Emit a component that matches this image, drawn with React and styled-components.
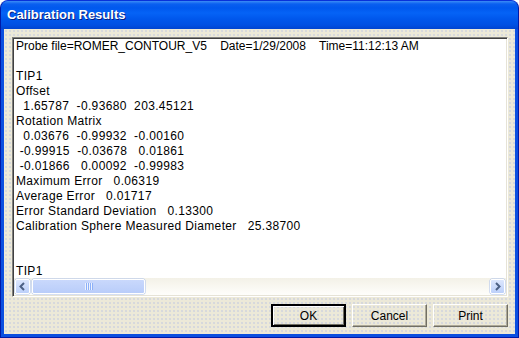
import React from "react";
import styled, { createGlobalStyle, css } from "styled-components";

const GlobalStyle = createGlobalStyle`
  html, body {
    margin: 0;
    padding: 0;
    background: #ffffff;
  }
  #root {
    width: 519px;
    height: 338px;
  }
`;

const header = "Probe file=ROMER_CONTOUR_V5    Date=1/29/2008    Time=11:12:13 AM";

const lines = [
  "",
  "TIP1",
  "Offset",
  "  1.65787  -0.93680  203.45121",
  "Rotation Matrix",
  "  0.03676  -0.99932  -0.00160",
  " -0.99915  -0.03678   0.01861",
  " -0.01866   0.00092  -0.99983",
  "Maximum Error   0.06319",
  "Average Error   0.01717",
  "Error Standard Deviation   0.13300",
  "Calibration Sphere Measured Diameter   25.38700",
  "",
  "",
  "TIP1",
];

export default function App() {
  return (
    <>
      <GlobalStyle />
      <Window>
        <TitleBar>
          <Title>Calibration Results</Title>
        </TitleBar>
        <Body>
          <TextBox>
            <TextArea>
              <Line $header>{header}</Line>
              {lines.map((line, i) => (
                <Line key={i}>{line || "\u00a0"}</Line>
              ))}
            </TextArea>
            <ScrollBar>
              <ArrowButton>
                <Chevron dir="left" />
              </ArrowButton>
              <Thumb>
                <Grip>
                  <span />
                  <span />
                  <span />
                  <span />
                </Grip>
              </Thumb>
              <Track />
              <ArrowButton>
                <Chevron dir="right" />
              </ArrowButton>
            </ScrollBar>
          </TextBox>
          <ButtonRow>
            <Button $default>OK</Button>
            <Button>Cancel</Button>
            <Button>Print</Button>
          </ButtonRow>
        </Body>
      </Window>
    </>
  );
}

function Chevron({ dir }) {
  return (
    <svg width="9" height="9" viewBox="0 0 9 9">
      <path
        d={dir === "left" ? "M6 1 L2.5 4.5 L6 8" : "M3 1 L6.5 4.5 L3 8"}
        fill="none"
        stroke="#4d6185"
        strokeWidth="2"
      />
    </svg>
  );
}

const Window = styled.div`
  display: flex;
  flex-direction: column;
  width: 519px;
  height: 338px;
  box-sizing: border-box;
  background: #0a4fe0;
  border-radius: 8px 8px 0 0;
  border: 1px solid #0019a8;
  border-top-color: #0831d9;
  overflow: hidden;
`;

const TitleBar = styled.div`
  flex-shrink: 0;
  height: 28px;
  display: flex;
  align-items: center;
  padding-left: 6px;
  background: linear-gradient(
    to bottom,
    #3b8cf6 0px,
    #0a5ff0 3px,
    #0058ee 7px,
    #0563f6 12px,
    #0057ec 18px,
    #0050e3 24px,
    #0044d0 28px
  );
`;

const Title = styled.span`
  font-family: "Liberation Sans", Arial, sans-serif;
  font-weight: bold;
  font-size: 13px;
  color: #ffffff;
  text-shadow: 1px 1px 0 #0a1e80;
  padding-bottom: 1px;
`;

const Body = styled.div`
  flex: 1;
  min-height: 0;
  display: flex;
  flex-direction: column;
  margin: 0 3px 3px 3px;
  padding: 8px 7px 7px 8px;
  background-color: #ece9d8;
  background-image: radial-gradient(circle, #d6d8dc 0.7px, transparent 0.9px);
  background-size: 4px 4px;
`;

const TextBox = styled.div`
  flex: 1;
  display: flex;
  flex-direction: column;
  min-height: 0;
  background: #ffffff;
  border: 1px solid;
  border-color: #7f7f7f #ffffff #ffffff #7f7f7f;
  box-shadow: inset 1px 1px 0 #404040, inset -1px -1px 0 #e6e3d6;
  padding: 1px;
`;

const TextArea = styled.div`
  flex: 1;
  min-height: 0;
  overflow: hidden;
  padding: 0 0 0 2px;
  font-family: "Liberation Sans", Arial, sans-serif;
  font-size: 12px;
  line-height: 15px;
  color: #000000;
`;

const Line = styled.div`
  white-space: pre;
  letter-spacing: ${(p) => (p.$header ? "0" : "0.35px")};
`;

const ScrollBar = styled.div`
  flex-shrink: 0;
  display: flex;
  align-items: stretch;
  height: 17px;
  background: linear-gradient(to bottom, #f3f1e7, #fefefb);
`;

const ArrowButton = styled.div`
  width: 15px;
  margin: 1px;
  box-sizing: border-box;
  display: flex;
  align-items: center;
  justify-content: center;
  border: 1px solid #ffffff;
  border-radius: 2px;
  background: linear-gradient(to bottom, #dce6fd, #bcd0fa);
  box-shadow: 0 0 0 0.5px #a9bfeb;
`;

const Thumb = styled.div`
  width: 113px;
  margin: 1px 0 1px 1px;
  box-sizing: border-box;
  display: flex;
  align-items: center;
  justify-content: center;
  border: 1px solid #ffffff;
  border-radius: 2px;
  background: linear-gradient(to bottom, #c9d8fc, #b9cdfa);
  box-shadow: 0 0 0 0.5px #a9bfeb;
`;

const Grip = styled.div`
  display: flex;
  gap: 1px;
  span {
    width: 1px;
    height: 7px;
    background: #eef3fe;
    box-shadow: 1px 0 0 #8cb0f8;
  }
`;

const Track = styled.div`
  flex: 1;
`;

const ButtonRow = styled.div`
  flex-shrink: 0;
  display: flex;
  justify-content: flex-end;
  gap: 6px;
  margin-top: 7px;
`;

const Button = styled.div`
  width: 75px;
  height: 23px;
  box-sizing: border-box;
  display: flex;
  align-items: center;
  justify-content: center;
  font-family: "Liberation Sans", Arial, sans-serif;
  font-size: 12px;
  color: #000000;
  background: transparent;
  border: 1px solid;
  border-color: #ffffff #716f64 #716f64 #ffffff;
  box-shadow: inset -1px -1px 0 #aca899;
  ${(p) =>
    p.$default &&
    css`
      border: 2px solid;
      border-color: #000000;
      box-shadow: inset 1px 1px 0 #ffffff, inset -1px -1px 0 #716f64;
    `}
`;
